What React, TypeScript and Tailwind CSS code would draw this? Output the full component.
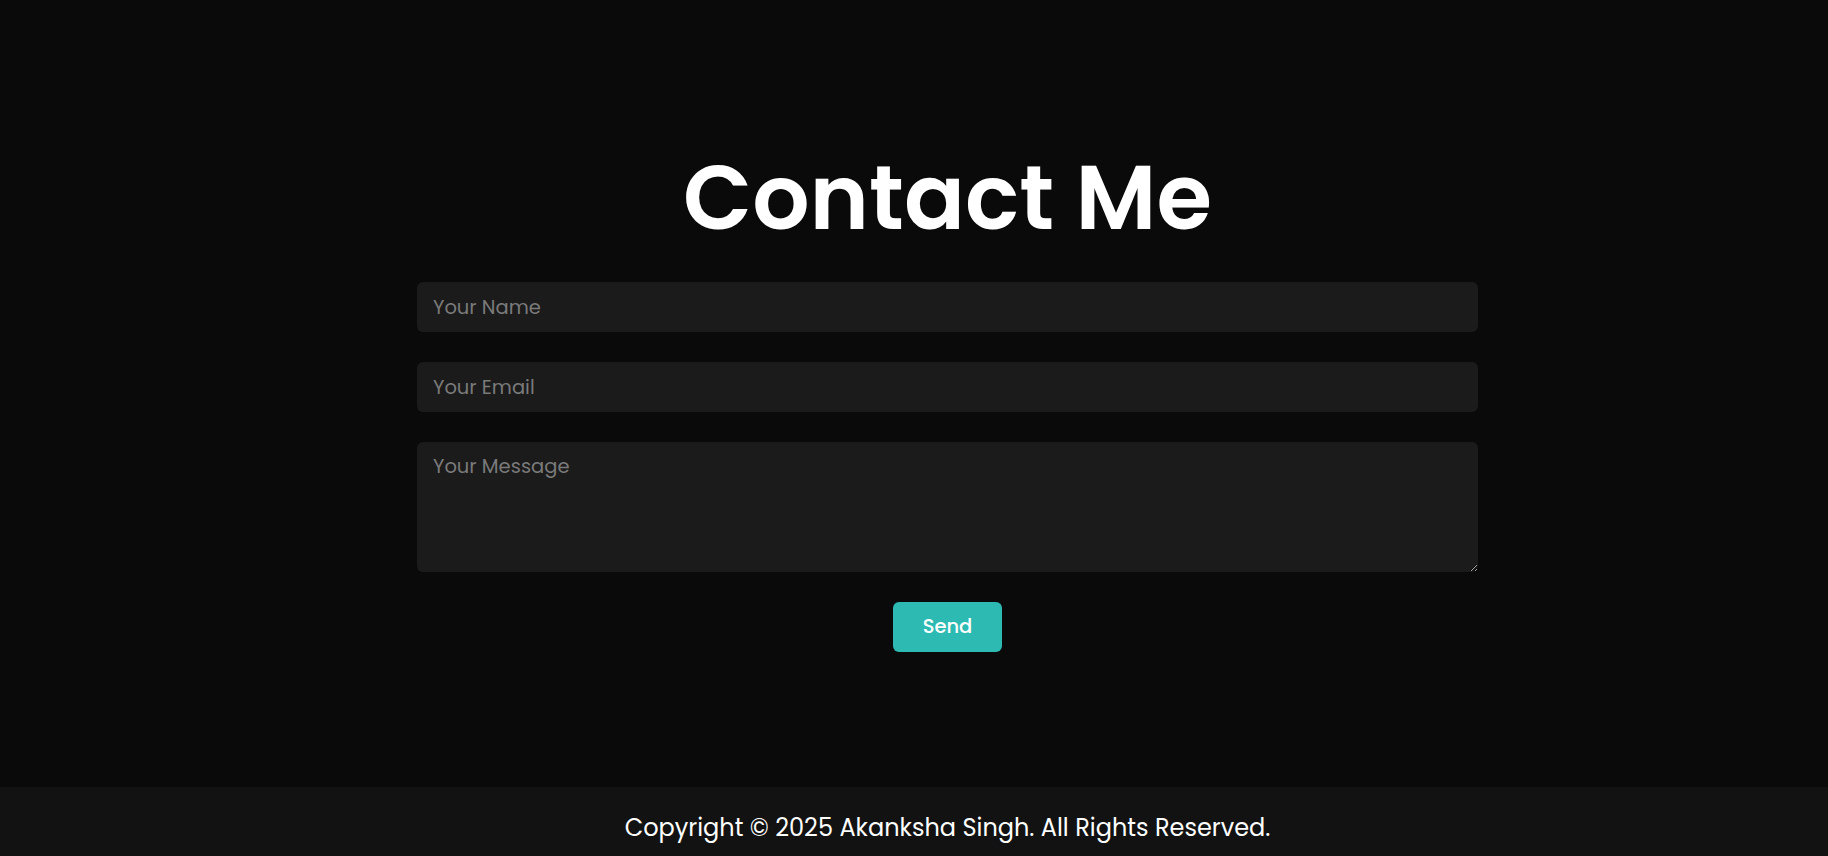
import { FC } from 'react';

const font = { fontFamily: 'Poppins, Inter, "Noto Sans", sans-serif' };

const ContactForm: FC = () => {
  return (
    <form className="flex flex-col items-center w-[1061px]" onSubmit={(e) => e.preventDefault()}>
      <input
        type="text"
        placeholder="Your Name"
        className="w-full h-[50px] px-4 rounded-md bg-[#1b1b1b] text-[19.5px] text-white placeholder:text-[#7a7a7a] outline-none"
      />
      <input
        type="email"
        placeholder="Your Email"
        className="mt-[30px] w-full h-[50px] px-4 rounded-md bg-[#1b1b1b] text-[19.5px] text-white placeholder:text-[#7a7a7a] outline-none"
      />
      <textarea
        placeholder="Your Message"
        className="mt-[30px] w-full h-[130px] px-4 py-[10px] rounded-md bg-[#1b1b1b] text-[19.5px] text-white placeholder:text-[#7a7a7a] outline-none"
      />
      <button
        type="submit"
        className="mt-[30px] w-[109px] h-[50px] rounded-md bg-[#2dbab2] text-white text-[19.5px] font-medium"
      >
        Send
      </button>
    </form>
  );
};

export default function App() {
  return (
    <div className="min-h-screen bg-[#0a0a0a] text-white" style={font}>
      <main className="h-[787px] flex flex-col items-center pl-[67px] pt-[144px]">
        <h1 className="text-[90px] font-semibold leading-[1.2] mb-[30px]">Contact Me</h1>
        <ContactForm />
      </main>
      <footer className="bg-[#121212] pl-[67px] pt-[23px] pb-4 text-center">
        <p className="text-[24px] leading-[36px]">Copyright © 2025 Akanksha Singh. All Rights Reserved.</p>
      </footer>
    </div>
  );
}
